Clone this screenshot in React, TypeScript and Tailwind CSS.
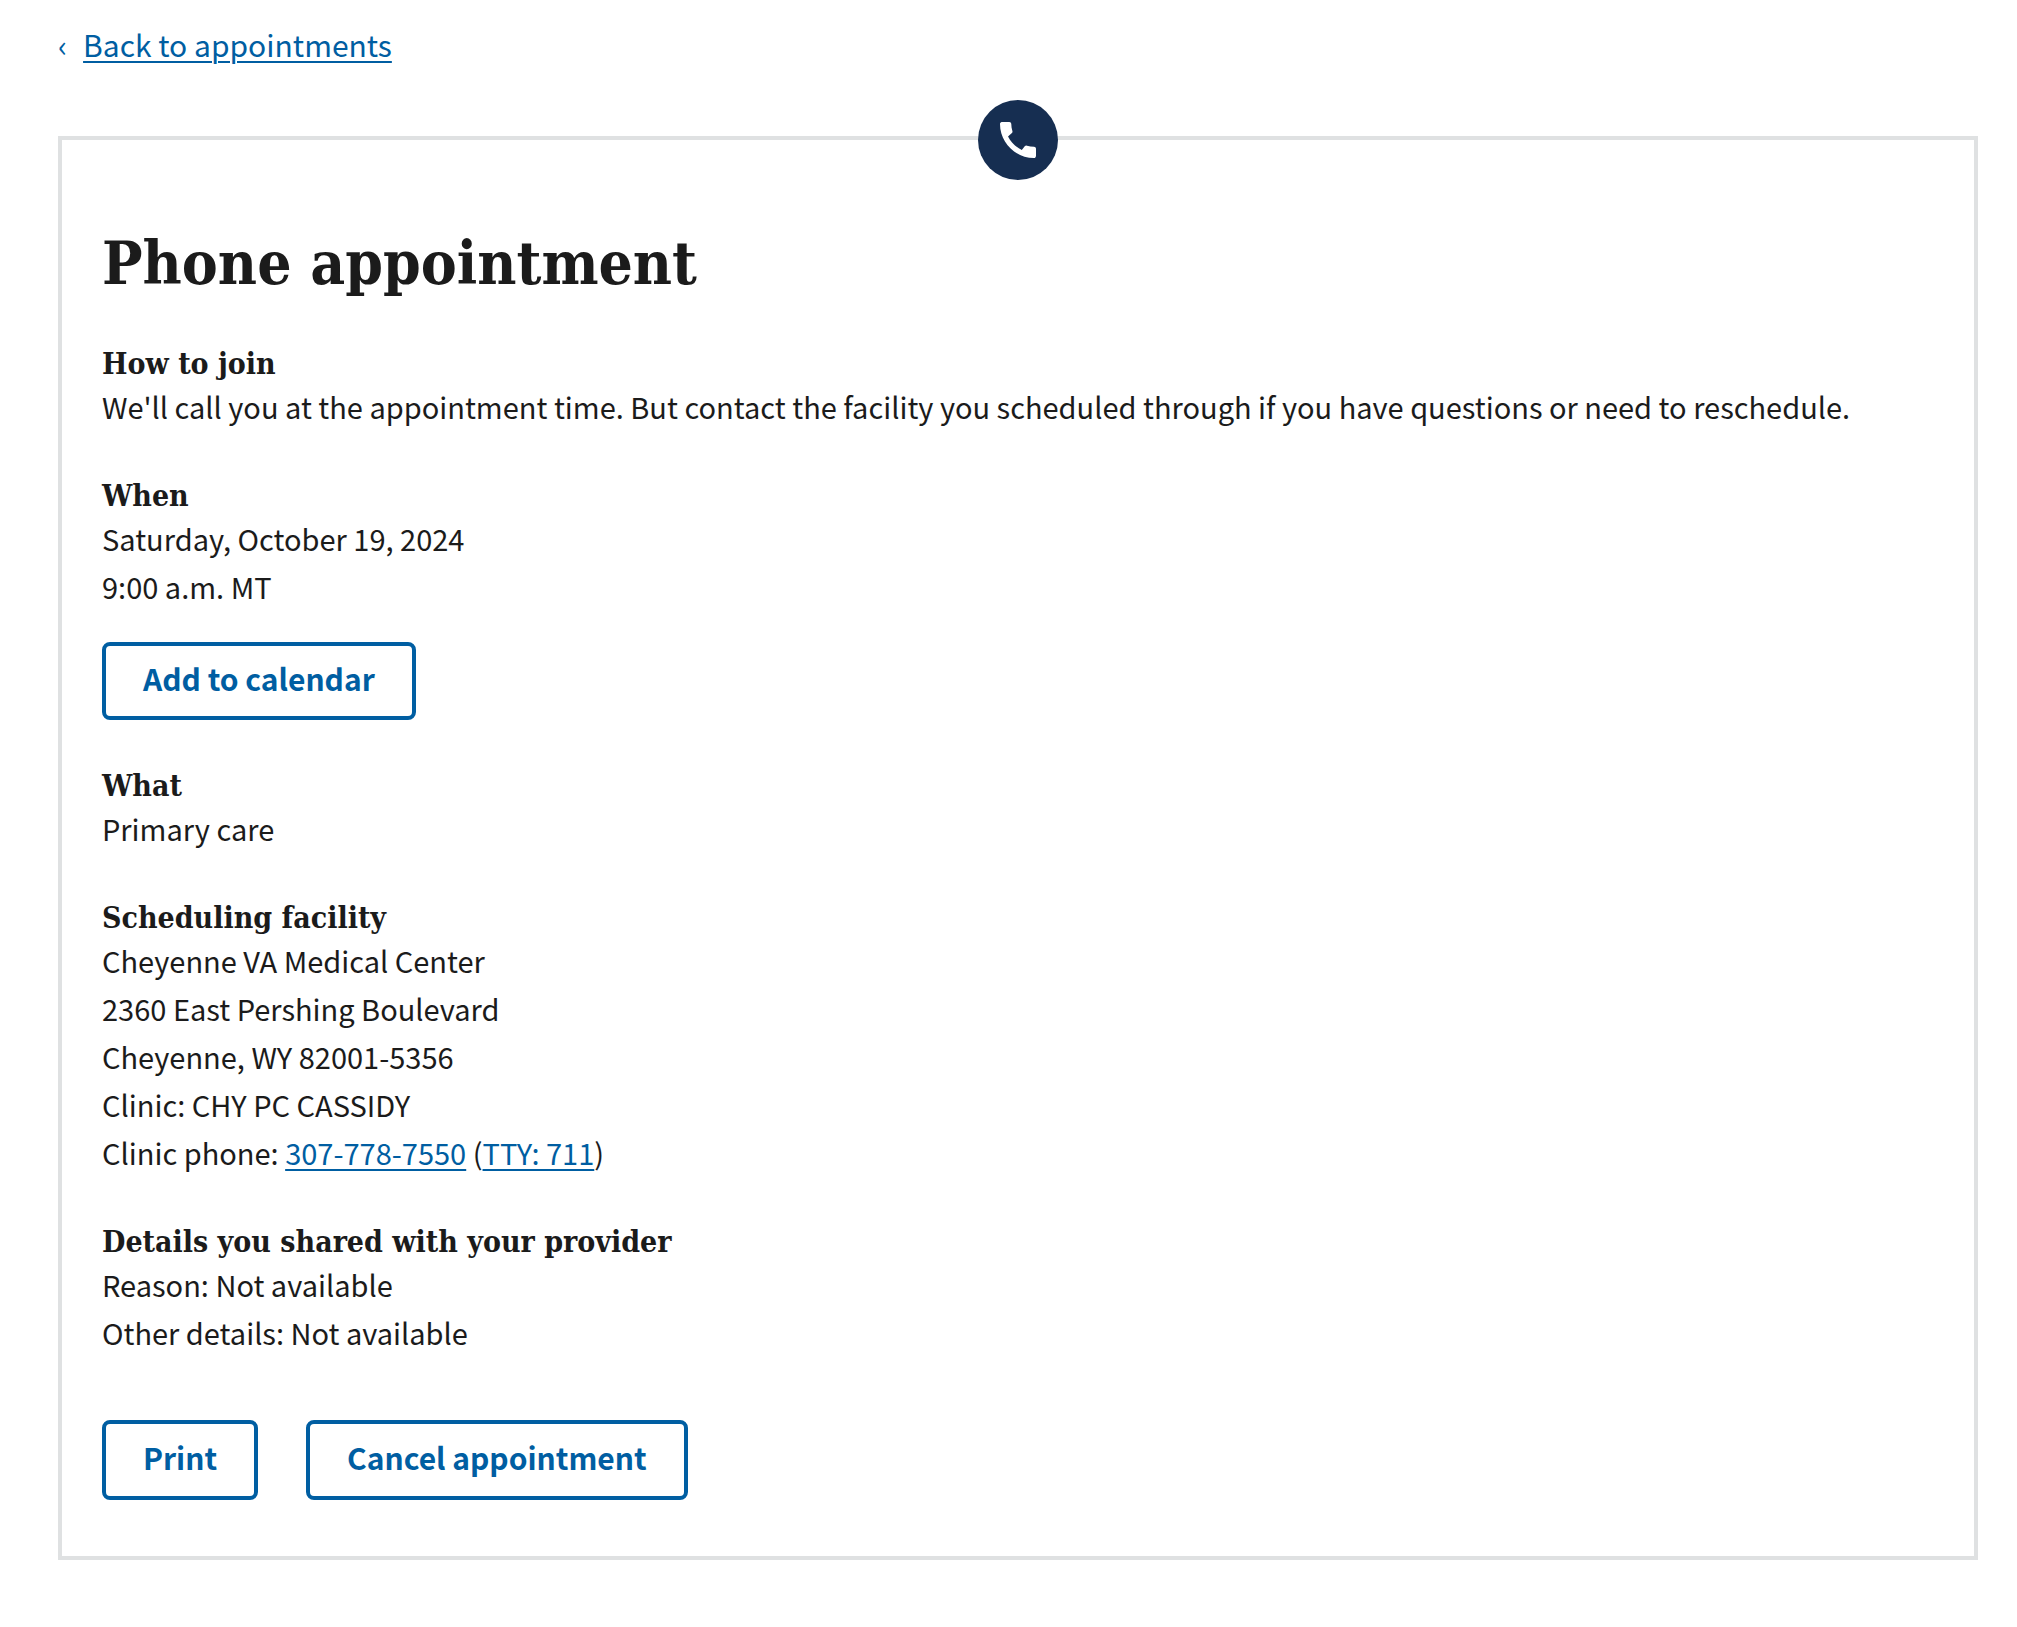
import type { ReactNode } from "react";

const linkClass = "text-[#005ea2] underline decoration-2 underline-offset-4 hover:text-[#162e51]";

function ActionButton({ heightClass = "h-20", children }: { heightClass?: string; children: ReactNode }) {
  return (
    <button
      type="button"
      className={`${heightClass} cursor-pointer rounded-lg border-4 border-[#005ea2] bg-white px-[37px] pb-1.5 text-[30px] leading-8 font-bold text-[#005ea2] hover:border-[#162e51] hover:text-[#162e51]`}
    >
      {children}
    </button>
  );
}

function Section({ title, children }: { title: string; children: ReactNode }) {
  return (
    <section>
      <h2 className="font-['DejaVu_Serif_Condensed','DejaVu_Serif',serif] text-[30px] leading-9 font-bold">
        {title}
      </h2>
      {children}
    </section>
  );
}

export default function App() {
  return (
    <div className="min-h-screen bg-white px-[58px] pt-5 pr-[39px] pb-16 font-['Noto_Sans_CJK_SC',sans-serif] text-[29px] leading-[48px] text-[#1b1b1b]">
      <nav aria-label="Breadcrumb" className="flex items-center gap-4 text-[30px] text-[#005ea2]">
        <span aria-hidden="true">‹</span>
        <a href="#appointments" className={linkClass}>
          Back to appointments
        </a>
      </nav>

      <main className="relative mt-[68px] border-4 border-[#dfe1e2] px-10 pt-20 pb-14">
        <div className="absolute -top-10 left-1/2 flex size-20 -translate-x-1/2 items-center justify-center rounded-full bg-[#162e51]">
          <svg viewBox="0 0 24 24" className="size-12 fill-white" aria-hidden="true">
            <path d="M20.01 15.38c-1.23 0-2.42-.2-3.53-.56a.977.977 0 0 0-1.01.24l-1.57 1.97c-2.83-1.35-5.48-3.9-6.89-6.83l1.95-1.66c.27-.28.35-.67.24-1.02-.37-1.11-.56-2.3-.56-3.53 0-.54-.45-.99-.99-.99H4.19C3.65 3 3 3.24 3 3.99 3 13.28 10.73 21 20.01 21c.71 0 .99-.63.99-1.18v-3.45c0-.54-.45-.99-.99-.99z" />
          </svg>
        </div>

        <h1 className="font-['DejaVu_Serif_Condensed','DejaVu_Serif',serif] text-[60px] leading-[86px] font-bold">
          Phone appointment
        </h1>

        <div className="mt-10 flex flex-col gap-12">
          <Section title="How to join">
            <p>
              We'll call you at the appointment time. But contact the facility you scheduled through if you have
              questions or need to reschedule.
            </p>
          </Section>

          <Section title="When">
            <p>Saturday, October 19, 2024</p>
            <p>9:00 a.m. MT</p>
            <div className="mt-8 flex">
              <ActionButton heightClass="h-[78px]">Add to calendar</ActionButton>
            </div>
          </Section>

          <Section title="What">
            <p>Primary care</p>
          </Section>

          <Section title="Scheduling facility">
            <p>Cheyenne VA Medical Center</p>
            <p>2360 East Pershing Boulevard</p>
            <p>Cheyenne, WY 82001-5356</p>
            <p>Clinic: CHY PC CASSIDY</p>
            <p>
              Clinic phone:{" "}
              <a href="tel:3077787550" className={linkClass}>
                307-778-7550
              </a>{" "}
              (
              <a href="tel:711" className={linkClass}>
                TTY: 711
              </a>
              )
            </p>
          </Section>

          <Section title="Details you shared with your provider">
            <p>Reason: Not available</p>
            <p>Other details: Not available</p>
          </Section>
        </div>

        <div className="mt-16 flex flex-wrap gap-12">
          <ActionButton>Print</ActionButton>
          <ActionButton>Cancel appointment</ActionButton>
        </div>
      </main>
    </div>
  );
}
